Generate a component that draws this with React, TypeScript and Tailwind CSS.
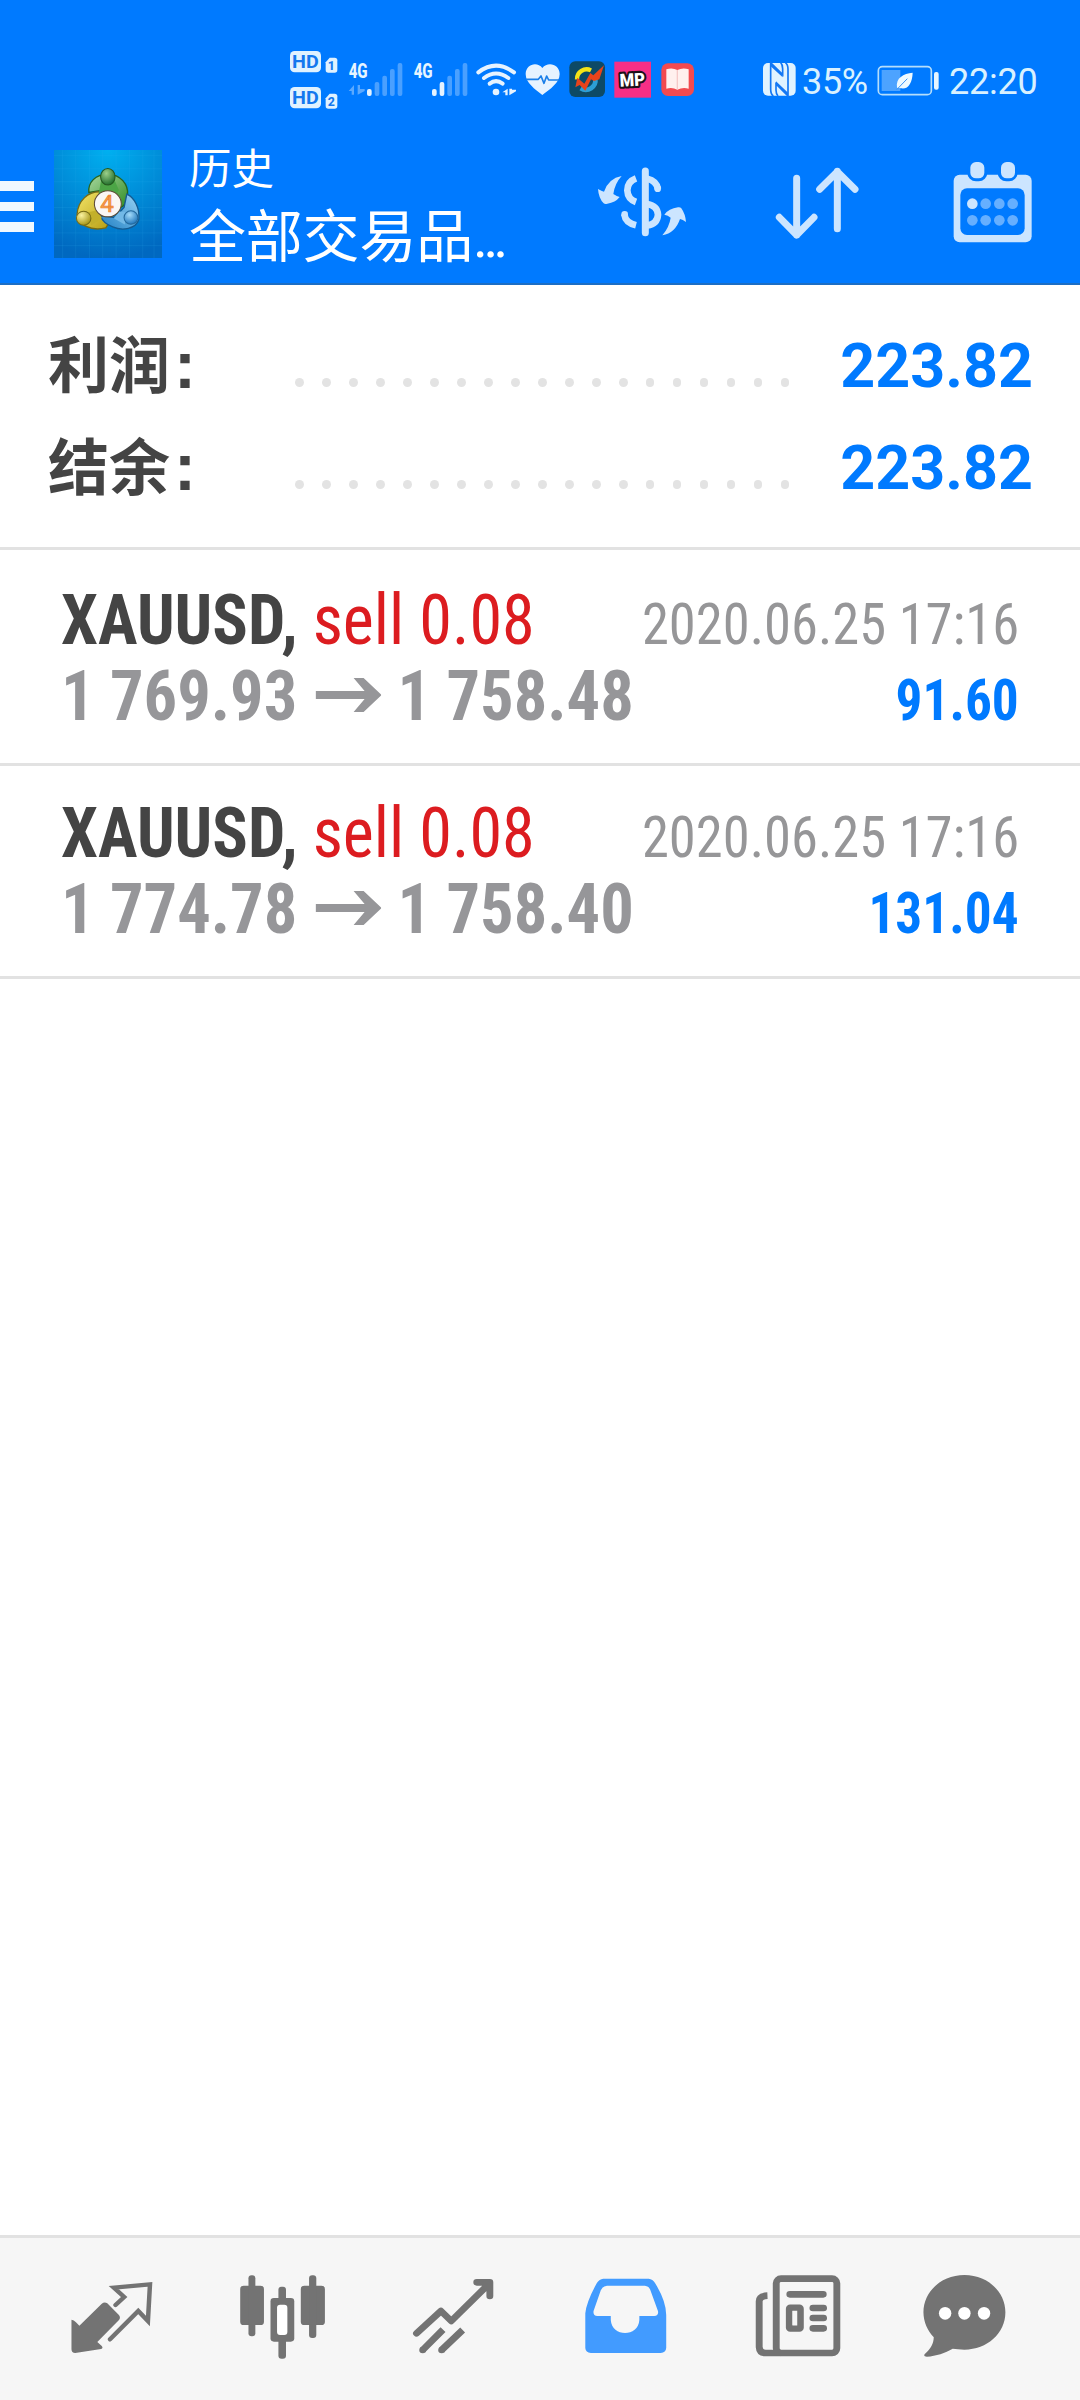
import type { ReactNode } from "react"

const deals = [
  { symbol: "XAUUSD", side: "sell 0.08", time: "2020.06.25 17:16", open: "1 769.93", close: "1 758.48", profit: "91.60" },
  { symbol: "XAUUSD", side: "sell 0.08", time: "2020.06.25 17:16", open: "1 774.78", close: "1 758.40", profit: "131.04" },
]

const totals = [
  { label: "利润", value: "223.82" },
  { label: "结余", value: "223.82" },
]

function Icon({ box, className, children }: { box: string; className: string; children: ReactNode }) {
  return (
    <svg viewBox={box} preserveAspectRatio="none" className={`block shrink-0 ${className}`} fill="none">
      {children}
    </svg>
  )
}

function SignalBars({ x, levels }: { x: number; levels: number }) {
  const tops = [147, 126, 107, 87, 69]
  return (
    <g fill="#e6f3ff">
      {tops.map((top, i) => (
        <rect
          key={top}
          x={x + i * 23}
          y={top}
          width="14"
          height={168 - top}
          rx="6"
          opacity={i < levels ? 1 : 0.32}
        />
      ))}
    </g>
  )
}

function StatusBar() {
  return (
    <div className="flex h-[130px] items-start pt-[40px] text-[#d9f1ff]">
      <Icon box="42 0 180 240" className="ml-[284px] h-[80px] w-[60px]">
        <g fill="#e0f2ff">
          <rect x="60" y="33" width="93" height="64" rx="14" />
          <rect x="60" y="141" width="93" height="64" rx="14" />
          <path d="M179 53H194Q202 53 202 61V90Q202 98 194 98H175Q167 98 167 90V67Z" />
          <path d="M179 161H194Q202 161 202 169V198Q202 206 194 206H175Q167 206 167 198V175Z" />
        </g>
        <g fill="#1478ee" fontFamily="Roboto, sans-serif" fontWeight="700" textAnchor="middle">
          <text x="106" y="84" fontSize="53" textLength="80" lengthAdjust="spacingAndGlyphs">HD</text>
          <text x="106" y="192" fontSize="53" textLength="80" lengthAdjust="spacingAndGlyphs">HD</text>
          <text x="184" y="91" fontSize="37" fontWeight="800">1</text>
          <text x="184" y="198" fontSize="37" fontWeight="800">2</text>
        </g>
      </Icon>
      <Icon box="222 0 198 240" className="h-[80px] w-[66px]">
        <text x="236" y="113" fontSize="60" fontWeight="800" fontFamily="Roboto, sans-serif" fill="#e6f5ff" textLength="57" lengthAdjust="spacingAndGlyphs">4G</text>
        <path d="M236 153L252 135V164H245V153ZM263 135V164L284 153V147H270V135Z" fill="#5ba9ff" />
        <SignalBars x={291} levels={1} />
      </Icon>
      <Icon box="420 0 192 240" className="h-[80px] w-[64px]">
        <text x="431" y="113" fontSize="60" fontWeight="800" fontFamily="Roboto, sans-serif" fill="#e6f5ff" textLength="57" lengthAdjust="spacingAndGlyphs">4G</text>
        <SignalBars x={486} levels={2} />
      </Icon>
      <Icon box="12 0 138 240" className="h-[80px] w-[46px]">
        <g stroke="#e6f3ff" strokeWidth="12" strokeLinecap="round">
          <path d="M25 97Q78 57 132 97" />
          <path d="M42 114Q78 87 115 114" />
          <path d="M59 131Q78 116 98 131" />
        </g>
        <g fill="#e6f3ff">
          <circle cx="78" cy="156" r="10" />
          <path d="M97 157L113 146V166H106V157ZM118 146V166L138 154V149H126V146Z" />
        </g>
      </Icon>
      <Icon box="150 0 132 240" className="h-[80px] w-[44px]">
        <path d="M217 165C195 148 167 128 167 102C167 72 202 63 217 84C233 63 269 72 269 102C269 128 240 148 217 165Z" fill="#e6f3ff" />
        <path d="M169 118H205L213 108L222 130L230 108L236 120H267" stroke="#1b7fe8" strokeWidth="5" strokeLinejoin="round" />
      </Icon>
      <Icon box="282 0 138 240" className="h-[80px] w-[46px]">
        <rect x="298" y="64" width="107" height="107" rx="18" fill="#0d4a66" />
        <path d="M321 118A29 29 0 0 1 363 91" stroke="#f5e417" strokeWidth="13" />
        <path d="M376 116A29 29 0 0 1 332 145" stroke="#2c9fd6" strokeWidth="14" />
        <path d="M316 142L322 113L343 131L361 99L370 106L402 76L388 118L372 123L363 118L346 152L329 135Z" fill="#e8431b" />
      </Icon>
      <Icon box="420 0 138 240" className="h-[80px] w-[46px]">
        <rect x="433" y="65" width="110" height="108" fill="#f72f86" />
        <text x="449" y="138" fontSize="54" fontWeight="900" fontFamily="Roboto, sans-serif" textLength="76" lengthAdjust="spacingAndGlyphs" fill="#fff" stroke="#1c1018" strokeWidth="13" paintOrder="stroke" strokeLinejoin="round" transform="rotate(-3 488 118)">MP</text>
      </Icon>
      <Icon box="558 0 132 240" className="h-[80px] w-[44px]">
        <rect x="574" y="70" width="98" height="98" rx="20" fill="#f24a50" />
        <path d="M589 88Q607 82 622 90Q638 82 656 88V146Q638 141 622 149Q607 141 589 146Z" fill="#fff0ee" />
        <path d="M622 90V148" stroke="#f5c9c8" strokeWidth="4" />
      </Icon>
      <Icon box="57 0 123 240" className="ml-[59px] h-[80px] w-[41px]">
        <rect x="69" y="69" width="98" height="98" rx="15" fill="#e0f3ff" />
        <g stroke="#1478f4" strokeWidth="5">
          <path d="M100 168Q92 163 92 148V68L128 104V86Q128 74 122 68" />
          <path d="M136 68Q144 73 144 88V168L108 132V150Q108 162 114 168" />
        </g>
        <path d="M92 68L128 104V112L92 79ZM108 124L144 158V168L108 132Z" fill="#1478f4" />
      </Icon>
      <div className="ml-[2px] h-[80px] w-[71px] font-[Roboto,sans-serif] text-[36px] leading-[84px] tracking-[-0.3px]">35%</div>
      <Icon box="399 0 210 240" className="h-[80px] w-[70px]">
        <rect x="415" y="80" width="159" height="84" rx="12" stroke="#b5defb" strokeWidth="5" />
        <path d="M425 90H481V153H425Z" fill="#4da3ff" />
        <rect x="582" y="96" width="14" height="53" rx="6" fill="#e6f5ff" />
        <path d="M518 98C490 101 467 113 471 143L483 145C505 149 517 128 518 98Z" fill="#effaff" />
        <path d="M470 149L502 116" stroke="#3b93f5" strokeWidth="3" />
      </Icon>
      <div className="ml-[6px] h-[80px] font-[Roboto,sans-serif] text-[36px] leading-[84px] tracking-[-0.2px]">22:20</div>
    </div>
  )
}

function AppLogo() {
  return (
    <Icon box="157 60 313 323" className="ml-[20px] mt-[20px] h-[108px] w-[108px]">
      <defs>
        <radialGradient id="sky" cx="0.5" cy="0" r="1">
          <stop offset="0" stopColor="#00b0f0" />
          <stop offset="0.55" stopColor="#0089d6" />
          <stop offset="1" stopColor="#0068c0" />
        </radialGradient>
        <linearGradient id="green" x1="0" y1="0" x2="1" y2="1">
          <stop offset="0" stopColor="#a9d8a0" />
          <stop offset="1" stopColor="#2f8c22" />
        </linearGradient>
        <linearGradient id="gold" x1="0" y1="0" x2="1" y2="1">
          <stop offset="0" stopColor="#f4e66a" />
          <stop offset="1" stopColor="#b59b10" />
        </linearGradient>
        <linearGradient id="azure" x1="1" y1="0" x2="0" y2="1">
          <stop offset="0" stopColor="#9bd4f5" />
          <stop offset="1" stopColor="#1f7fc4" />
        </linearGradient>
        <radialGradient id="greenHead" cx="0.4" cy="0.3" r="0.7">
          <stop offset="0" stopColor="#9ccf8a" />
          <stop offset="1" stopColor="#226f2c" />
        </radialGradient>
        <radialGradient id="goldHead" cx="0.35" cy="0.3" r="0.7">
          <stop offset="0" stopColor="#fbf3a0" />
          <stop offset="1" stopColor="#a8981a" />
        </radialGradient>
        <radialGradient id="azureHead" cx="0.4" cy="0.3" r="0.7">
          <stop offset="0" stopColor="#a6dcfa" />
          <stop offset="1" stopColor="#2278bd" />
        </radialGradient>
      </defs>
      <rect x="157" y="60" width="313" height="323" fill="url(#sky)" />
      <path d="M182 60V383M220 60V383M260 60V383M298 60V383M337 60V383M376 60V383M414 60V383M447 60V383M157 76H470M157 116H470M157 155H470M157 193H470M157 232H470M157 270H470M157 308H470M157 346H470" stroke="#35b4ee" strokeWidth="2" opacity="0.2" />
      <path d="M258 187C255 157 277 133 313 132C350 133 373 163 370 194C367 220 358 232 345 234L338 190L290 182Z" fill="url(#green)" stroke="#28651f" strokeWidth="4" />
      <path d="M292 185C255 183 226 213 224 252C226 284 264 304 307 293L325 265L285 243Z" fill="url(#gold)" stroke="#756a16" strokeWidth="4" />
      <path d="M368 192C390 202 406 233 403 268C394 296 356 303 327 290C306 282 296 270 292 257L333 262L360 232Z" fill="url(#azure)" stroke="#155b91" strokeWidth="4" />
      <path d="M294 149L312 166L332 149L345 180L335 198H285Z" fill="#4ca546" />
      <ellipse cx="313" cy="140" rx="21" ry="25" fill="url(#greenHead)" stroke="#24571f" strokeWidth="3" />
      <path d="M253 247L283 240L296 263L265 286Z" fill="#c3b02b" />
      <circle cx="243" cy="264" r="21" fill="url(#goldHead)" stroke="#756a16" strokeWidth="3" />
      <path d="M371 246L346 244L330 264L362 283Z" fill="#72b9e7" />
      <circle cx="380" cy="262" r="20" fill="url(#azureHead)" stroke="#24689b" strokeWidth="3" />
      <circle cx="313" cy="221" r="39" fill="#faf7f4" stroke="#5e4b36" strokeWidth="3" />
      <text x="311" y="245" fontSize="70" fontFamily="Roboto, sans-serif" fill="#f4a04c" stroke="#ee8130" strokeWidth="2" textAnchor="middle">4</text>
    </Icon>
  )
}

function Header() {
  return (
    <header className="h-[285px] border-b-2 border-[#1d6ec4] bg-[#007aff]">
      <StatusBar />
      <div className="flex items-start">
        <div className="mt-[51px] flex w-[34px] flex-col gap-[11px]">
          <div className="h-[9.5px] bg-[#f0f8ff]" />
          <div className="h-[9.5px] bg-[#f0f8ff]" />
          <div className="h-[9.5px] bg-[#f0f8ff]" />
        </div>
        <AppLogo />
        <div className="ml-[27px] mt-[12px] w-[406px] font-[Roboto,'Noto_Sans_CJK_SC',sans-serif] text-white">
          <div className="h-[60px] text-[42.5px] leading-[56px]">历史</div>
          <div className="text-[57px] leading-[72px] tracking-[-0.2px] whitespace-nowrap">
            全部交易品<span className="[font-stretch:75%]">…</span>
          </div>
        </div>
        <Icon box="105 90 285 240" className="mt-[30px] h-[80px] w-[95px]">
          <path d="M256 123V308" stroke="#cce5ff" strokeWidth="21" strokeLinecap="round" />
          <path d="M228 145Q202 155 202 181Q203 207 228 216M228 286Q196 278 193 253M262 146Q289 152 294 177M262 222Q292 227 294 254Q292 282 262 286" stroke="#cce5ff" strokeWidth="20" />
          <circle cx="293" cy="176" r="10" fill="#cce5ff" />
          <circle cx="194" cy="253" r="10" fill="#cce5ff" />
          <g fill="#cce5ff">
            <path d="M185 138Q146 145 132 185Q125 184 114 177Q116 205 131 220Q135 223 142 221Q166 218 179 201Q171 199 160 192Q164 161 185 138Z" />
            <path d="M307 316Q346 309 360 267Q368 269 378 276Q376 252 364 235Q361 231 354 232Q326 236 313 254Q324 256 332 263Q328 291 307 316Z" />
          </g>
        </Icon>
        <Icon box="630 90 285 240" className="ml-[80px] mt-[30px] h-[80px] w-[95px]">
          <path d="M710 145V315M658 262L710 315L762 262M832 296V124M779 178L832 125L885 178" stroke="#cce5ff" strokeWidth="21" strokeLinecap="round" strokeLinejoin="round" />
        </Icon>
        <Icon box="1170 90 255 255" className="ml-[85px] mt-[30px] h-[85px] w-[85px]">
          <rect x="1181" y="134" width="234" height="203" rx="18" fill="#cce5ff" />
          <rect x="1201" y="175" width="193" height="140" rx="20" fill="#007aff" />
          <rect x="1222" y="84" width="60" height="70" rx="26" fill="#007aff" />
          <rect x="1313" y="84" width="60" height="70" rx="26" fill="#007aff" />
          <rect x="1231" y="96" width="42" height="49" rx="17" fill="#cce5ff" />
          <rect x="1323" y="96" width="42" height="49" rx="17" fill="#cce5ff" />
          {[1237, 1277, 1318, 1358].map((x) => (
            <g key={x} fill="#66afff">
              <circle cx={x} cy="221" r="16" fill={x === 1237 ? "#cce5ff" : "#66afff"} />
              <circle cx={x} cy="271" r="16" />
            </g>
          ))}
        </Icon>
      </div>
    </header>
  )
}

function Totals() {
  return (
    <section className="h-[265px] border-b-[3px] border-[#e2e2e2] pt-[30px]">
      {totals.map((row) => (
        <div key={row.label} className="flex h-[102px] items-center pl-[48px] pr-[47px] font-bold">
          <div className="h-[102px] w-[247px] font-[Roboto,'Noto_Sans_CJK_SC',sans-serif] text-[61px] leading-[104px] whitespace-nowrap text-[#444]">
            {row.label}
            <span className="pl-[4px] font-['Liberation_Sans'] text-[66px] leading-none">:</span>
          </div>
          <div className="mt-[33px] flex gap-[18.3px]">
            {Array.from({ length: 19 }, (_, i) => (
              <span key={i} className="size-[8.7px] rounded-full bg-[#e3e3e3]" />
            ))}
          </div>
          <div className="ml-auto font-[Roboto,sans-serif] text-[61px] leading-[102px] text-[#007aff]">{row.value}</div>
        </div>
      ))}
    </section>
  )
}

function Deals() {
  return (
    <section className="pt-[3px] font-['Roboto_Condensed',Roboto,sans-serif] [font-stretch:75%]">
      {deals.map((deal) => (
        <div key={deal.open} className="h-[213px] border-b-[3px] border-[#e2e2e2] pl-[61px] pr-[61px] pt-[29px]">
          <div className="flex h-[76px] items-baseline justify-between whitespace-nowrap">
            <div className="origin-left scale-x-[0.944] text-[70px] leading-[76px]">
              <span className="font-bold text-[#444]">{deal.symbol},</span>{" "}
              <span className="text-[#dc1c20]">{deal.side}</span>
            </div>
            <div className="origin-right scale-x-[0.957] text-[57px] leading-[76px] text-[#969698]">{deal.time}</div>
          </div>
          <div className="flex h-[76px] items-baseline justify-between font-bold whitespace-nowrap">
            <div className="flex origin-left scale-x-[0.95] items-baseline text-[70px] leading-[76px] text-[#969699]">
              {deal.open}
              <Icon box="0 0 66 34" className="ml-[19px] mr-[17px] h-[34px] w-[69.5px] -translate-y-[8px]">
                <path d="M0 13H49L38 0H48L66 17L48 34H38L49 21H0Z" fill="#969699" />
              </Icon>
              {deal.close}
            </div>
            <div className="origin-right scale-x-[0.935] text-[57px] leading-[76px] text-[#007aff]">{deal.profit}</div>
          </div>
        </div>
      ))}
    </section>
  )
}

function TabBar() {
  return (
    <nav className="flex h-[165px] items-start border-t-[3px] border-[#e2e2e2] bg-[#f6f6f6] pl-[64.3px] pt-[30px]">
      <Icon box="187.3 144 278.8 288" className="mr-[75px] size-[96px]">
        <path d="M209 299Q216 300 222 307L232 317L297 251Q305 244 313 250L346 284Q353 291 347 300L284 366L297 378Q302 384 295 387L220 399Q209 399 209 388Z" fill="#737373" />
        <path d="M337 255L362 231L332 203L437 193L431 303L403 273L321 358" stroke="#737373" strokeWidth="13" strokeLinecap="round" />
      </Icon>
      <Icon box="683.9 144 278.8 288" className="mr-[75px] size-[96px]">
        <g fill="#737373">
          <rect x="699" y="197" width="69" height="118" rx="10" />
          <rect x="723" y="166" width="20" height="183" rx="9" />
          <rect x="875" y="197" width="70" height="118" rx="10" />
          <rect x="899" y="166" width="21" height="188" rx="9" />
          <rect x="787" y="234" width="69" height="131" rx="10" />
          <rect x="810" y="200" width="22" height="216" rx="9" />
        </g>
        <rect x="806" y="254" width="30" height="91" rx="9" fill="#fff" />
      </Icon>
      <Icon box="1180.5 144 278.8 288" className="mr-[75px] size-[96px]">
        <g stroke="#737373" strokeWidth="20" strokeLinejoin="round">
          <path d="M1211 340L1282 273L1312 303L1423 190M1386 187H1424V228" strokeLinecap="round" />
          <path d="M1229 390L1288 329M1284 390L1345 330" />
        </g>
        <circle cx="1229" cy="390" r="10" fill="#737373" />
        <circle cx="1284" cy="390" r="10" fill="#737373" />
      </Icon>
      <Icon box="108.9 144 278.8 288" className="mr-[75px] size-[96px]">
        <path fillRule="evenodd" d="M185 176H317Q329 177 335 188Q368 243 368 285V384Q367 398 352 399H149Q134 398 133 384V280Q136 246 167 188Q174 177 185 176ZM196 197Q183 199 178 211L157 273Q155 287 168 288H207V300C210 352 287 352 290 300V288H333Q347 286 344 273L321 208Q317 198 306 197Z" fill="#429bff" />
      </Icon>
      <Icon box="605.5 144 278.8 288" className="mr-[75px] size-[96px]">
        <rect x="687.5" y="176" width="176" height="223" rx="14" stroke="#737373" strokeWidth="20" />
        <path d="M662 227Q638 228 638 244V381Q639 399 657 399H700" stroke="#737373" strokeWidth="20" />
        <path d="M727 223H824M794 264H825M794 294H825M794 325H825" stroke="#737373" strokeWidth="20" strokeLinecap="round" />
        <rect x="725" y="263" width="33" height="63" rx="3" stroke="#737373" strokeWidth="19" />
        <rect x="735" y="273" width="11" height="42" fill="#f6f6f6" />
      </Icon>
      <Icon box="1102.1 144 278.8 288" className="size-[96px]">
        <path d="M1234 165C1300 165 1353 214 1353 277C1353 340 1300 389 1234 389Q1214 388 1200 386C1178 399 1152 408 1125 410Q1113 409 1119 402C1137 386 1144 372 1145 352C1127 332 1115 306 1115 277C1115 214 1168 165 1234 165Z" fill="#737373" />
        <g fill="#fff">
          <ellipse cx="1178" cy="280" rx="18" ry="19" />
          <ellipse cx="1234" cy="280" rx="18" ry="19" />
          <ellipse cx="1291" cy="280" rx="18" ry="19" />
        </g>
      </Icon>
    </nav>
  )
}

export default function App() {
  return (
    <div className="flex h-[2400px] w-[1080px] flex-col overflow-hidden bg-white">
      <Header />
      <main className="flex-1">
        <Totals />
        <Deals />
      </main>
      <TabBar />
    </div>
  )
}
